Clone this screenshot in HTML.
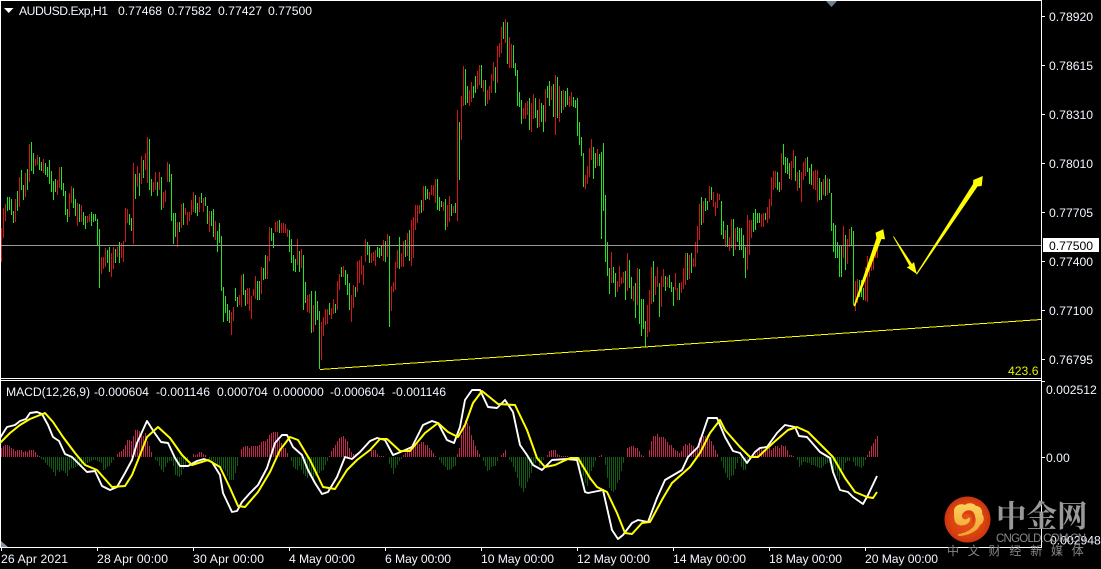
<!DOCTYPE html>
<html><head><meta charset="utf-8"><style>
html,body{margin:0;padding:0;background:#000;width:1101px;height:569px;overflow:hidden}
svg{display:block}
text{font-family:"Liberation Sans","Noto Sans CJK SC",sans-serif;font-size:12.2px;fill:#f2f7ff}
</style></head><body>
<svg width="1101" height="569" viewBox="0 0 1101 569" xmlns="http://www.w3.org/2000/svg">
<rect width="1101" height="569" fill="#000"/>
<g transform="translate(.5 0)" fill="none" stroke-width="1" shape-rendering="crispEdges">
<path stroke="#d41515" d="M1 228V262M3 208V238M5 204V221M15 199V222M19 177V207M25 173V197M29 144V182M35 159V166M37 155V165M43 159V173M57 180V195M59 167V188M69 193V217M71 186V203M77 203V226M81 205V222M87 216V223M89 214V222M101 257V274M103 257V269M105 248V267M111 253V277M113 247V269M117 247V257M121 243V258M123 241V262M125 208V242M127 209V223M133 163V244M137 166V187M141 156V184M145 153V170M147 137V183M153 182V192M155 172V190M159 172V190M163 192V208M165 190V202M167 162V182M177 222V247M181 204V228M185 208V215M187 212V225M189 212V221M191 200V215M193 192V212M199 197V212M203 198V212M209 211V232M215 221V240M231 312V335M233 307V321M239 295V305M241 275V307M247 288V304M249 288V311M251 296V319M253 289V296M255 276V299M261 267V294M267 256V279M269 227V261M275 222V232M277 221V232M281 223V233M283 223V233M285 224V233M287 229V237M297 239V265M301 249V268M307 295V312M309 294V313M313 305V332M321 322V360M323 317V336M325 309V325M327 309V324M331 308V319M333 299V314M337 281V310M339 274V290M343 266V277M351 295V322M353 285V308M357 261V292M359 260V283M361 256V275M363 265V285M365 239V262M371 253V263M373 252V261M375 250V266M383 240V261M387 234V257M391 286V311M393 282V292M395 262V290M397 250V268M401 253V267M403 241V267M407 233V256M411 220V266M413 217V258M415 205V230M417 205V223M419 205V214M423 186V211M429 192V200M431 185V195M433 185V196M435 179V203M443 202V211M447 205V227M449 196V222M453 206V213M457 110V221M461 96V140M463 66V106M469 90V106M471 82V102M477 71V89M479 65V85M483 80V92M487 90V104M489 86V100M491 74V93M493 62V81M497 46V83M499 43V57M501 27V53M505 19V43M509 37V68M511 44V68M523 108V119M525 103V119M527 101V115M531 103V132M533 94V119M539 99V127M545 89V122M551 86V100M555 75V135M559 86V122M563 90V110M569 96V107M571 92V106M585 175V189M587 166V184M589 148V177M591 139V160M597 149V166M611 252V283M617 281V292M619 266V287M621 277V284M623 272V283M627 253V291M633 286V301M637 268V305M647 305V337M649 290V332M651 267V304M655 276V295M657 267V287M661 276V307M663 269V287M667 277V287M675 273V290M677 288V300M681 282V293M683 268V289M685 253V285M689 255V279M693 258V267M695 242V267M697 226V253M699 204V240M703 201V223M709 186V202M713 192V207M715 202V216M717 193V208M719 194V200M725 230V247M729 237V251M731 219V248M735 228V250M747 215V270M749 220V255M751 220V238M761 214V227M763 213V227M767 207V223M769 199V219M771 177V206M773 171V190M775 171V188M781 153V190M791 161V180M793 150V168M797 172V191M801 172V202M803 162V180M805 158V176M813 171V189M815 170V190M817 170V202M823 179V195M827 178V195M843 226V258M847 239V264M849 229V247M855 281V311M857 279V303M865 267V301M867 256V302M869 260V277M871 258V271M873 247V270M875 247V258M877 248V258"/>
<path stroke="#24e424" d="M7 197V211M9 197V210M11 199V215M13 211V223M17 191V211M21 170V190M23 185V200M27 169V190M31 142V171M33 153V174M39 157V170M41 162V171M45 163V175M47 167V177M49 160V184M51 171V192M53 181V200M55 179V192M61 167V190M63 183V196M65 191V215M67 209V222M73 188V208M75 199V216M79 204V222M83 212V225M85 216V229M91 212V226M93 214V222M95 214V221M97 219V245M99 229V288M107 250V263M109 247V272M115 249V263M119 242V263M129 214V225M131 218V231M135 174V199M139 173V196M143 160V178M149 139V190M151 179V196M157 182V196M161 177V210M169 164V182M171 174V221M173 213V244M175 213V237M179 222V232M183 203V225M195 195V213M197 203V216M201 193V203M205 197V206M207 206V224M211 211V226M213 209V237M217 231V252M219 223V243M221 236V291M223 287V322M225 296V313M227 304V321M229 310V323M235 288V301M237 297V307M243 274V295M245 290V306M257 281V300M259 281V300M263 268V280M265 255V279M271 228V241M273 233V248M279 220V233M289 230V252M291 239V263M293 255V271M295 259V272M299 251V272M303 255V310M305 282V303M311 291V333M315 291V325M317 301V320M319 311V369M329 303V315M335 304V313M341 267V277M345 270V285M347 274V295M349 283V310M355 287V297M367 242V255M369 245V263M377 247V257M379 248V258M381 246V256M385 241V262M389 236V327M399 237V269M405 240V257M409 230V261M421 200V213M425 186V200M427 189V199M437 179V210M439 197V211M441 201V207M445 199V230M451 204V216M455 203V213M459 122V180M465 69V105M467 86V103M473 86V98M475 76V93M481 65V88M485 80V106M495 67V93M503 22V39M507 22V64M513 45V68M515 63V76M517 70V106M519 92V107M521 100V124M529 98V130M535 98V118M537 110V128M541 103V122M543 105V132M547 86V98M549 81V106M553 84V117M557 77V118M561 91V113M565 91V107M567 88V105M573 97V107M575 100V108M577 98V136M579 122V145M581 137V156M583 153V187M593 147V179M595 153V168M599 154V166M601 152V239M603 143V211M605 195V262M607 242V276M609 268V294M613 267V283M615 273V297M625 271V300M629 260V288M631 277V299M635 283V318M639 269V324M641 299V336M643 299V329M645 321V347M653 261V302M659 283V317M665 276V291M669 275V288M671 282V292M673 287V306M679 283V300M687 253V280M691 253V273M701 197V225M705 198V211M707 201V210M711 187V200M721 201V235M723 221V239M727 225V247M733 219V256M737 227V242M739 228V250M741 228V250M743 235V258M745 247V278M753 213V232M755 209V230M757 213V223M759 213V223M765 213V220M777 172V190M779 182V192M783 144V165M785 157V173M787 158V174M789 163V179M795 156V181M799 170V188M807 157V172M809 168V184M811 164V185M819 178V200M821 182V200M825 175V196M829 179V193M831 193V231M833 223V252M835 225V258M837 242V258M839 245V277M841 245V277M845 235V270M851 227V245M853 231V305M859 280V297M861 280V297M863 288V300"/>
</g>
<!-- frame -->
<g fill="#fff" shape-rendering="crispEdges">
<rect x="0" y="0" width="1041" height="1"/>
<rect x="0" y="0" width="1" height="547"/>
<rect x="1041" y="0" width="1" height="548"/>
<rect x="0" y="378" width="1041" height="1"/>
<rect x="0" y="380" width="1041" height="1"/>
<rect x="0" y="547" width="1041" height="1"/>
<rect x="1042" y="16" width="3" height="1"/><rect x="1042" y="65" width="3" height="1"/><rect x="1042" y="114" width="3" height="1"/><rect x="1042" y="163" width="3" height="1"/><rect x="1042" y="212" width="3" height="1"/><rect x="1042" y="261" width="3" height="1"/><rect x="1042" y="310" width="3" height="1"/><rect x="1042" y="359" width="3" height="1"/>
<rect x="1042" y="381" width="3" height="1"/><rect x="1042" y="457" width="3" height="1"/>
<rect x="1" y="548" width="1" height="3"/><rect x="97" y="548" width="1" height="3"/><rect x="193" y="548" width="1" height="3"/><rect x="289" y="548" width="1" height="3"/><rect x="385" y="548" width="1" height="3"/><rect x="481" y="548" width="1" height="3"/><rect x="577" y="548" width="1" height="3"/><rect x="673" y="548" width="1" height="3"/><rect x="769" y="548" width="1" height="3"/><rect x="865" y="548" width="1" height="3"/>
</g>
<rect x="1" y="245" width="1040" height="1" fill="#999" shape-rendering="crispEdges"/>
<!-- fib line -->
<path d="M320 369.5L1041 319.5" stroke="#ffff00" stroke-width="1" fill="none" shape-rendering="crispEdges"/>
<!-- arrows -->
<g fill="#ffff00">
<polygon points="853.5,306 876.5,238 875.5,232.7 883.3,229.3 885,239.3 881.5,239 855,306.5"/>
<polygon points="893,236.6 893.8,236.4 912,264 914,262 916.8,274 906.7,267.3 909.5,266"/>
<polygon points="916,274 973,184 973.3,180 982.8,176 981.7,186 977.5,186.5 917,274.5"/>
</g>
<!-- gray markers -->
<polygon points="826,1 837,1 831.5,7" fill="#708090"/>
<polygon points="1,541 8,547 1,547" fill="#8795a5"/>
<polygon points="4,8 13.5,8 8.7,13" fill="#fff"/>
<!-- histogram -->
<g transform="translate(.5 0)" fill="none" shape-rendering="crispEdges">
<path stroke="#c0284c" d="M1 457v-9M3 457v-11M5 457v-12M7 457v-12M9 457v-11M11 457v-9M13 457v-8M15 457v-6M17 457v-7M19 457v-7M21 457v-7M23 457v-5M25 457v-6M27 457v-5M29 457v-7M31 457v-7M33 457v-7M35 457v-5M37 457v-2M39 457v-1M117 457v-3M119 457v-5M121 457v-6M123 457v-8M125 457v-12M127 457v-17M129 457v-17M131 457v-16M133 457v-21M135 457v-27M137 457v-27M139 457v-26M141 457v-24M143 457v-21M145 457v-24M147 457v-16M149 457v-11M151 457v-5M193 457v-3M195 457v-2M197 457v-3M199 457v-5M201 457v-5M203 457v-3M205 457v-2M241 457v-8M243 457v-10M245 457v-11M247 457v-11M249 457v-9M251 457v-11M253 457v-11M255 457v-11M257 457v-11M259 457v-12M261 457v-15M263 457v-16M265 457v-16M267 457v-18M269 457v-22M271 457v-24M273 457v-25M275 457v-25M277 457v-25M279 457v-17M281 457v-14M283 457v-9M285 457v-9M287 457v-4M329 457v-1M331 457v-6M333 457v-9M335 457v-12M337 457v-16M339 457v-19M341 457v-20M343 457v-21M345 457v-18M347 457v-16M349 457v-9M351 457v-5M353 457v-3M355 457v-3M371 457v-7M373 457v-7M375 457v-7M377 457v-3M379 457v-1M381 457v-1M383 457v-1M403 457v-2M405 457v-4M407 457v-5M409 457v-8M411 457v-9M413 457v-11M415 457v-12M417 457v-13M419 457v-13M421 457v-15M423 457v-15M425 457v-12M427 457v-12M429 457v-9M431 457v-7M433 457v-4M435 457v-1M457 457v-3M459 457v-9M461 457v-22M463 457v-32M465 457v-37M467 457v-34M469 457v-31M471 457v-22M473 457v-17M475 457v-11M477 457v-7M479 457v-3M501 457v-2M503 457v-4M505 457v-7M547 457v-2M549 457v-6M551 457v-7M553 457v-7M555 457v-7M557 457v-3M559 457v-2M561 457v-1M563 457v-1M565 457v-1M567 457v-1M599 457v-1M601 457v-2M627 457v-9M629 457v-10M631 457v-11M633 457v-11M635 457v-9M637 457v-9M639 457v-6M641 457v-2M643 457v-1M649 457v-7M651 457v-16M653 457v-21M655 457v-21M657 457v-23M659 457v-20M661 457v-20M663 457v-20M665 457v-18M667 457v-15M669 457v-12M671 457v-12M673 457v-9M675 457v-7M677 457v-6M679 457v-4M681 457v-6M683 457v-11M685 457v-13M687 457v-12M689 457v-14M691 457v-12M693 457v-11M695 457v-7M697 457v-9M699 457v-19M701 457v-21M703 457v-21M705 457v-21M707 457v-22M709 457v-18M711 457v-16M713 457v-12M715 457v-7M717 457v-3M753 457v-2M755 457v-3M757 457v-5M759 457v-8M761 457v-8M763 457v-7M765 457v-7M767 457v-7M769 457v-9M771 457v-7M773 457v-9M775 457v-11M777 457v-11M779 457v-9M781 457v-12M783 457v-11M785 457v-11M787 457v-7M789 457v-2M791 457v-2M793 457v-1M867 457v-2M869 457v-6M871 457v-11M873 457v-14M875 457v-18M877 457v-21"/>
<path stroke="#0f5c12" d="M41 457v2M43 457v3M45 457v6M47 457v8M49 457v10M51 457v12M53 457v15M55 457v19M57 457v13M59 457v15M61 457v13M63 457v14M65 457v16M67 457v19M69 457v13M71 457v11M73 457v11M75 457v10M77 457v9M79 457v9M81 457v10M83 457v6M85 457v7M87 457v6M89 457v5M91 457v4M93 457v3M95 457v3M97 457v4M99 457v5M101 457v6M103 457v13M105 457v12M107 457v10M109 457v9M111 457v6M113 457v3M155 457v3M157 457v4M159 457v9M161 457v13M163 457v15M165 457v10M167 457v6M169 457v4M171 457v4M173 457v9M175 457v18M177 457v19M179 457v20M181 457v18M183 457v12M185 457v8M187 457v4M209 457v3M211 457v3M213 457v4M215 457v5M217 457v7M219 457v9M221 457v10M223 457v12M225 457v14M227 457v19M229 457v23M231 457v23M233 457v23M235 457v16M237 457v9M291 457v4M293 457v10M295 457v12M297 457v13M299 457v9M301 457v13M303 457v17M305 457v19M307 457v21M309 457v19M311 457v18M313 457v22M315 457v19M317 457v16M319 457v16M321 457v14M323 457v13M325 457v8M327 457v4M389 457v7M391 457v11M393 457v17M395 457v11M397 457v8M399 457v4M401 457v2M439 457v3M441 457v6M443 457v8M445 457v10M447 457v13M449 457v13M451 457v12M453 457v10M455 457v9M483 457v4M485 457v9M487 457v14M489 457v13M491 457v10M493 457v9M495 457v9M497 457v4M509 457v3M511 457v5M513 457v10M515 457v15M517 457v21M519 457v29M521 457v31M523 457v35M525 457v31M527 457v25M529 457v21M531 457v16M533 457v9M535 457v6M537 457v4M539 457v9M541 457v6M543 457v3M577 457v3M579 457v10M581 457v11M583 457v19M585 457v26M587 457v29M589 457v23M591 457v14M593 457v10M595 457v4M605 457v8M607 457v21M609 457v31M611 457v34M613 457v35M615 457v33M617 457v26M619 457v23M621 457v14M623 457v6M721 457v4M723 457v11M725 457v16M727 457v21M729 457v23M731 457v19M733 457v18M735 457v12M737 457v6M739 457v1M741 457v10M743 457v13M745 457v13M747 457v6M749 457v3M797 457v3M799 457v10M801 457v8M803 457v5M805 457v5M807 457v6M809 457v6M811 457v8M813 457v8M815 457v9M817 457v10M819 457v11M821 457v11M823 457v9M825 457v7M827 457v6M829 457v6M831 457v12M833 457v14M835 457v13M837 457v19M839 457v23M841 457v16M843 457v13M845 457v6M847 457v4M849 457v4M853 457v5M855 457v9M857 457v9M859 457v10M861 457v11M863 457v9M865 457v3"/>
</g>
<!-- macd lines -->
<polyline fill="none" stroke="#fff" stroke-width="1.9" stroke-linejoin="round" points="0,438 7,427 15,425 20,421 26,419 30,413 37,412 42,414 48,425 53,437 59,441 65,454 72,457 78,463 87,472 95,471 102,486 110,490 117,487 125,473 132,460 137,443 142,432 147,421 154,432 161,442 168,443 175,458 180,466 188,466 197,461 204,459 212,462 220,475 223,493 232,512 237,511 242,502 250,493 258,485 267,468 275,443 282,435 287,435 293,447 302,455 308,470 315,483 322,494 328,492 337,477 345,457 352,459 360,452 370,441 377,438 385,440 393,455 403,451 412,447 423,425 432,421 438,423 447,440 454,443 460,427 465,400 472,390 480,390 488,407 497,408 505,400 513,412 520,445 527,455 533,465 542,470 552,460 567,459 577,460 585,492 588,493 603,490 612,530 618,539 623,535 632,523 638,520 648,522 657,498 665,480 682,470 688,457 698,447 708,418 717,418 725,437 733,451 740,453 747,463 755,452 760,448 767,447 777,433 785,425 795,427 799,436 807,437 820,452 830,458 833,472 840,490 848,492 853,497 863,504 868,495 877,476"/>
<polyline fill="none" stroke="#ffff00" stroke-width="2" stroke-linejoin="round" points="0,443 10,433 20,425 30,419 45,413 53,422 63,437 75,453 85,465 97,470 112,487 125,486 132,475 138,460 147,437 158,427 170,438 182,455 192,465 208,460 220,467 230,488 238,506 245,507 258,492 270,472 280,450 290,437 298,440 310,460 323,487 335,489 347,470 357,460 370,450 380,439 387,439 400,451 410,451 425,433 438,423 448,432 458,437 465,425 473,403 482,391 498,404 515,405 527,430 537,458 545,467 555,465 570,458 578,458 590,478 597,487 607,492 617,513 625,533 632,534 642,523 650,522 663,498 672,483 690,467 700,453 710,433 720,420 725,430 740,447 750,457 758,457 773,443 788,430 797,427 808,432 823,447 833,457 845,478 855,492 867,497 873,498 877,492"/>
<!-- labels -->
<text x="19" y="15" textLength="89" lengthAdjust="spacing">AUDUSD.Exp,H1</text>
<text x="118" y="15">0.77468</text><text x="167.5" y="15">0.77582</text><text x="218" y="15">0.77427</text><text x="268" y="15">0.77500</text>
<text x="6" y="396" textLength="84" lengthAdjust="spacing">MACD(12,26,9)</text>
<text x="94" y="396">-0.000604</text><text x="156" y="396">-0.001146</text><text x="217" y="396">0.000704</text><text x="273" y="396">0.000000</text><text x="330" y="396">-0.000604</text><text x="392" y="396">-0.001146</text>
<g>
<text x="1049" y="21">0.78920</text><text x="1049" y="70">0.78615</text><text x="1049" y="119">0.78310</text><text x="1049" y="168">0.78010</text><text x="1049" y="217">0.77705</text><text x="1049" y="266">0.77400</text><text x="1049" y="315">0.77100</text><text x="1049" y="364">0.76795</text>
<text x="1046" y="394">0.002512</text><text x="1046" y="462">0.00</text><text x="1050" y="544.5">0.002948</text>
</g>
<rect x="1043" y="238" width="56" height="14" fill="#fff" shape-rendering="crispEdges"/>
<text x="1049" y="250" style="fill:#000">0.77500</text>
<text x="1008" y="375" style="fill:#e2ee00">423.6</text>
<g>
<text x="1" y="563" textLength="67" lengthAdjust="spacing">26 Apr 2021</text>
<text x="97" y="563" textLength="71" lengthAdjust="spacing">28 Apr 00:00</text>
<text x="193" y="563" textLength="71" lengthAdjust="spacing">30 Apr 00:00</text>
<text x="289" y="563" textLength="66" lengthAdjust="spacing">4 May 00:00</text>
<text x="385" y="563" textLength="66" lengthAdjust="spacing">6 May 00:00</text>
<text x="481" y="563" textLength="73" lengthAdjust="spacing">10 May 00:00</text>
<text x="577" y="563" textLength="73" lengthAdjust="spacing">12 May 00:00</text>
<text x="673" y="563" textLength="73" lengthAdjust="spacing">14 May 00:00</text>
<text x="769" y="563" textLength="73" lengthAdjust="spacing">18 May 00:00</text>
<text x="865" y="563" textLength="73" lengthAdjust="spacing">20 May 00:00</text>
</g>
<!-- logo -->
<defs><radialGradient id="lg" cx=".5" cy=".5" r=".55"><stop offset="0" stop-color="#e8551a"/><stop offset=".7" stop-color="#d9400f"/><stop offset="1" stop-color="#c2300f"/></radialGradient>
<linearGradient id="sw" x1="0" y1="0" x2="0" y2="1"><stop offset="0" stop-color="#fdd25e"/><stop offset="1" stop-color="#f0a02e"/></linearGradient></defs>
<circle cx="967.5" cy="519.5" r="23" fill="url(#lg)"/>
<path fill="url(#sw)" d="M954 510c1-5 7-7 11-5 3-3 9-2 11 1 4 0 7 4 6 8 3 3 2 9-2 11-2 5-9 10-20 11-2 0-3-1-1-2 6-1 12-4 15-8 3-5 2-12-3-14-5-2-10 1-9 5 1 3 5 3 6 1 1-1 3 0 2 2-1 5-9 7-13 4-3-2-3-6-3-14z"/>
<path fill="#d9400f" d="M963 514c1-3 5-5 9-3 3 2 4 7 2 11-1 2-2 1-2 0 1-4 0-7-3-8-2-1-4 0-6 1z"/>
<text x="996" y="527" style="font-family:'Noto Serif CJK SC',serif;font-size:30.5px;font-weight:700;fill:#999">中金网</text>
<text x="996" y="542" textLength="90" lengthAdjust="spacing" style="font-size:11.5px;fill:#8a8a8a">CNGOLD.COM.CN</text>
<text x="947" y="555" style="font-family:'Noto Sans CJK SC',sans-serif;font-size:12px;fill:#888;letter-spacing:8.8px">中文财经新媒体</text>
</svg>
</body></html>
